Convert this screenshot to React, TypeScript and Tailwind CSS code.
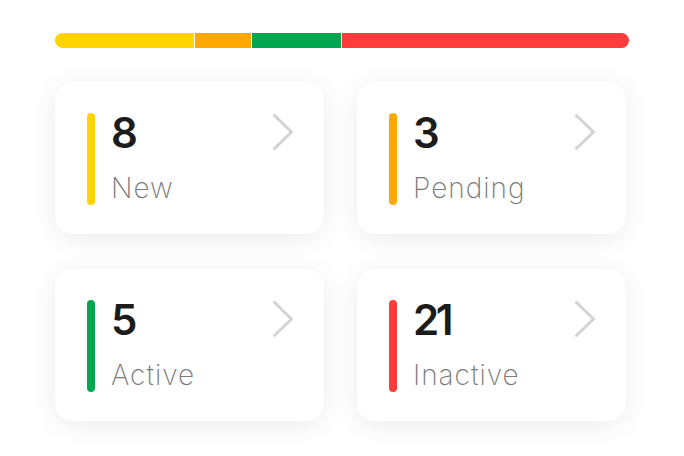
import React from "react";

const cards = [
  { n: "8", label: "New", color: "bg-[#ffd400]" },
  { n: "3", label: "Pending", color: "bg-[#ffa800]" },
  { n: "5", label: "Active", color: "bg-[#00a650]" },
  { n: "21", label: "Inactive", color: "bg-[#ff3b3b]" },
];

function Chevron() {
  return (
    <svg width="20" height="36" viewBox="0 0 20 36" fill="none">
      <polyline
        points="1.5,1.5 18.5,18 1.5,34.5"
        stroke="#d3d3d3"
        strokeWidth="3"
        strokeLinecap="round"
        strokeLinejoin="round"
      />
    </svg>
  );
}

export default function App() {
  return (
    <div
      className="w-[684px] h-[456px] bg-white pl-[55px] pt-[33px]"
      style={{ fontFamily: "Inter, 'Noto Sans', sans-serif" }}
    >
      <div className="flex w-[574px] h-[15px] rounded-full overflow-hidden gap-px bg-white">
        <div className="w-[139px] bg-[#ffd400]" />
        <div className="w-[56px] bg-[#ffa800]" />
        <div className="w-[89px] bg-[#00a650]" />
        <div className="flex-1 bg-[#ff3b3b]" />
      </div>
      <div className="mt-[34px] grid grid-cols-[269px_269px] gap-x-[33px] gap-y-[35px]">
        {cards.map((c) => (
          <div
            key={c.label}
            className="h-[152px] rounded-[18px] bg-white shadow-[0_4px_26px_rgba(0,0,0,0.08)] flex items-start pl-[32px] pt-[31px] pr-[31px]"
          >
            <div className={`w-2 h-[92px] rounded-full ${c.color}`} />
            <div className="ml-[16px] -mt-px flex flex-col gap-[20px]">
              <div className="text-[42px] leading-none font-semibold tracking-[-0.08em] text-[#1c1c1c]">{c.n}</div>
              <div className="text-[28px] leading-none font-extralight tracking-[1px] text-[#7a7a7a]">{c.label}</div>
            </div>
            <div className="ml-auto mt-px">
              <Chevron />
            </div>
          </div>
        ))}
      </div>
    </div>
  );
}
